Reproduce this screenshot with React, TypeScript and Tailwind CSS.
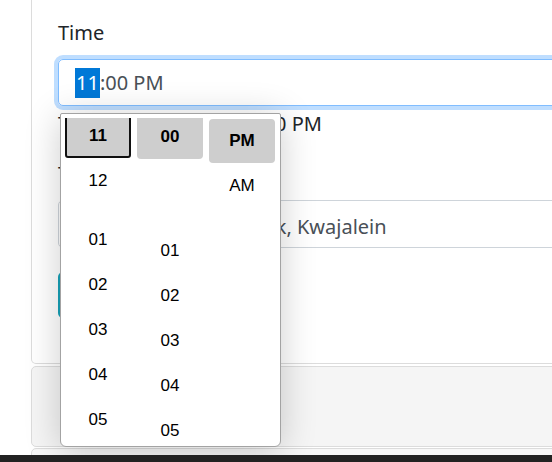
function Item({ label, className = "" }: { label: string; className?: string }) {
  return (
    <div className={`h-[44px] shrink-0 flex items-center justify-center ${className}`}>
      {label}
    </div>
  );
}

function TimePopup() {
  return (
    <div className="absolute left-[2px] top-[54px] z-10 w-[221px] h-[334px] bg-white border border-[#a3a3a3] rounded-t-[2px] rounded-b-[6px] shadow-[0_4px_36px_rgba(0,0,0,0.2)] flex gap-[6px] pt-[4px] pb-[4px] pl-[4px] pr-[5px] font-['Liberation_Sans',Arial,sans-serif] text-[17px] text-black">
      <div className="w-[66px] overflow-hidden">
        <div className="-mt-[4px] flex flex-col gap-px">
          <Item label="11" className="bg-[#cecece] border-2 border-[#101010] rounded-[3px] font-bold" />
          <Item label="12" />
          <Item label="01" className="mt-[14px]" />
          <Item label="02" />
          <Item label="03" />
          <Item label="04" />
          <Item label="05" />
        </div>
      </div>
      <div className="w-[66px] overflow-hidden">
        <div className="-mt-[4px] flex flex-col gap-px">
          <Item label="00" className="h-[45px] bg-[#cecece] rounded-b-[4px] font-bold" />
          <Item label="01" className="mt-[69px]" />
          <Item label="02" />
          <Item label="03" />
          <Item label="04" />
          <Item label="05" />
        </div>
      </div>
      <div className="w-[66px] overflow-hidden">
        <div className="mt-px flex flex-col gap-px">
          <Item label="PM" className="bg-[#cecece] rounded-[4px] font-bold" />
          <Item label="AM" />
        </div>
      </div>
    </div>
  );
}

export default function App() {
  return (
    <div className="w-[552px] h-[462px] overflow-hidden bg-white flex flex-col font-['Noto_Sans',sans-serif] text-[20px] text-[#212529]">
      <div className="h-[455px] overflow-hidden">
        <div className="ml-[31px] w-[620px]">
          <div className="border-x border-b border-[#dcdcdc] rounded-b-[5px] pt-[18px] pl-[26px] pr-[26px] pb-[45px] bg-white">
            <label className="block leading-[30px]">Time</label>
            <div className="relative mt-[11px]">
              <div className="h-[47px] border border-[#80bdff] rounded-[5px] shadow-[0_0_0_4px_rgba(0,123,255,0.25)] flex items-center pl-[16px] text-[#495057]">
                <span className="bg-[#0078d7] text-white h-[30px] leading-[30px] px-px">11</span>
                <span>:00 PM</span>
              </div>
              <TimePopup />
            </div>
            <p className="mt-[3px] leading-[30px]">Time in time zone: 11:00 PM</p>
            <label className="block mt-[20px] leading-[30px]">Timezone</label>
            <div className="mt-[11px] h-[48px] border border-[#ced4da] rounded-[5px] flex items-center pl-[24px] pt-[6px] text-[#495057]">
              (GMT-12:00) Eniwetok, Kwajalein
            </div>
            <button className="mt-[24px] h-[46px] w-[120px] rounded-[5px] bg-[#17a2b8] text-white">
              Convert
            </button>
          </div>
          <div className="mt-[2px] h-[81px] border border-[#dcdcdc] rounded-[5px] bg-[#f5f5f5]" />
          <div className="mt-px h-[20px] border border-[#dcdcdc] rounded-[5px] bg-[#f7f7f7]" />
        </div>
      </div>
      <div className="h-[7px] bg-[#222222]" />
    </div>
  );
}
